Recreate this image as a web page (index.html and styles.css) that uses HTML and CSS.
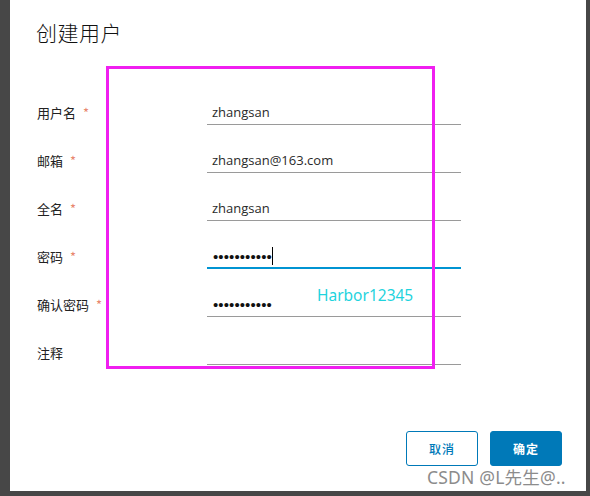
FILE: index.html
```html
<!DOCTYPE html>
<html lang="zh-CN">
<head>
<meta charset="utf-8">
<title>创建用户</title>
<link rel="stylesheet" href="styles.css">
</head>
<body>
<div class="dialog">
  <h3 class="title">创建用户</h3>
  <div class="form">
    <div class="row">
      <div class="label">用户名<span class="req">*</span></div>
      <div class="field"><span class="value">zhangsan</span></div>
    </div>
    <div class="row">
      <div class="label">邮箱<span class="req">*</span></div>
      <div class="field"><span class="value">zhangsan@163.com</span></div>
    </div>
    <div class="row">
      <div class="label">全名<span class="req">*</span></div>
      <div class="field"><span class="value">zhangsan</span></div>
    </div>
    <div class="row">
      <div class="label">密码<span class="req">*</span></div>
      <div class="field focus"><span class="dots">•••••••••••</span><span class="caret"></span></div>
    </div>
    <div class="row">
      <div class="label">确认密码<span class="req">*</span></div>
      <div class="field"><span class="dots">•••••••••••</span></div>
    </div>
    <div class="row">
      <div class="label">注释</div>
      <div class="field"></div>
    </div>
  </div>
  <div class="footer">
    <button class="btn btn-outline">取消</button>
    <button class="btn btn-primary">确定</button>
  </div>
  <div class="annot-box"></div>
  <div class="annot-text">Harbor12345</div>
  <div class="watermark">CSDN @L先生@..</div>
</div>
</body>
</html>
```
FILE: styles.css
```css
html, body {
  margin: 0;
  padding: 0;
}
body {
  background: #474747;
  width: 590px;
  height: 496px;
  overflow: hidden;
  font-family: "Open Sans", "Noto Sans CJK SC", sans-serif;
  color: #222;
}
.dialog {
  position: relative;
  margin-left: 10px;
  width: 576px;
  height: 491px;
  background: #fff;
  box-sizing: border-box;
  padding: 17px 0 0 0;
  display: flex;
  flex-direction: column;
}
.title {
  margin: 0 0 0 26px;
  font-family: "Noto Sans CJK SC", sans-serif;
  font-weight: 300;
  font-size: 21px;
  line-height: 30px;
  color: #111;
  letter-spacing: 0.5px;
}
.form {
  margin-top: 42px;
  display: flex;
  flex-direction: column;
}
.row {
  height: 48px;
  display: flex;
  align-items: center;
}
.label {
  width: 197px;
  padding-left: 27px;
  box-sizing: border-box;
  font-family: "Noto Sans CJK SC", sans-serif;
  font-size: 13px;
  line-height: 16px;
  color: #222;
}
.req {
  color: #e8866e;
  margin-left: 7px;
  font-size: 13px;
}
.field {
  width: 254px;
  height: 24px;
  box-sizing: border-box;
  border-bottom: 1px solid #9a9a9a;
  padding: 0 0 4px 5px;
  display: flex;
  align-items: flex-end;
  font-size: 13px;
  line-height: 16px;
  color: #2a2a2a;
}
.field.focus {
  border-bottom: 2px solid #0094d2;
  padding-bottom: 3px;
}
.dots {
  font-family: "Liberation Sans", sans-serif;
  font-size: 15px;
  letter-spacing: 0.1px;
  line-height: 12px;
  color: #111;
  padding: 0 0 1px 1px;
}
.caret {
  width: 1px;
  height: 18px;
  background: #000;
  margin-bottom: -1px;
}
.footer {
  margin-top: auto;
  margin-bottom: 25px;
  padding-right: 24px;
  display: flex;
  justify-content: flex-end;
  gap: 12px;
}
.btn {
  width: 72px;
  height: 35px;
  box-sizing: border-box;
  border-radius: 3px;
  font-family: "Noto Sans CJK SC", sans-serif;
  font-size: 12px;
  font-weight: 500;
  letter-spacing: 1px;
  padding: 0;
  cursor: pointer;
}
.btn-outline {
  background: #fff;
  color: #0079b8;
  border: 1px solid #0079b8;
}
.btn-primary {
  background: #0079b8;
  color: #fff;
  border: 1px solid #0079b8;
  font-weight: 700;
}
.annot-box {
  position: absolute;
  left: 96px;
  top: 66px;
  width: 329px;
  height: 303px;
  box-sizing: border-box;
  border: 3px solid #f01ff0;
}
.annot-text {
  position: absolute;
  left: 307px;
  top: 284px;
  font-family: "Noto Sans", sans-serif;
  font-size: 15.5px;
  line-height: 22px;
  color: #1fd3dd;
}
.watermark {
  position: absolute;
  left: 417px;
  top: 465px;
  font-family: "Noto Sans", "Noto Sans CJK SC", sans-serif;
  font-size: 17.5px;
  line-height: 24px;
  color: #8c8c8c;
  letter-spacing: 0.2px;
  white-space: nowrap;
}
```
